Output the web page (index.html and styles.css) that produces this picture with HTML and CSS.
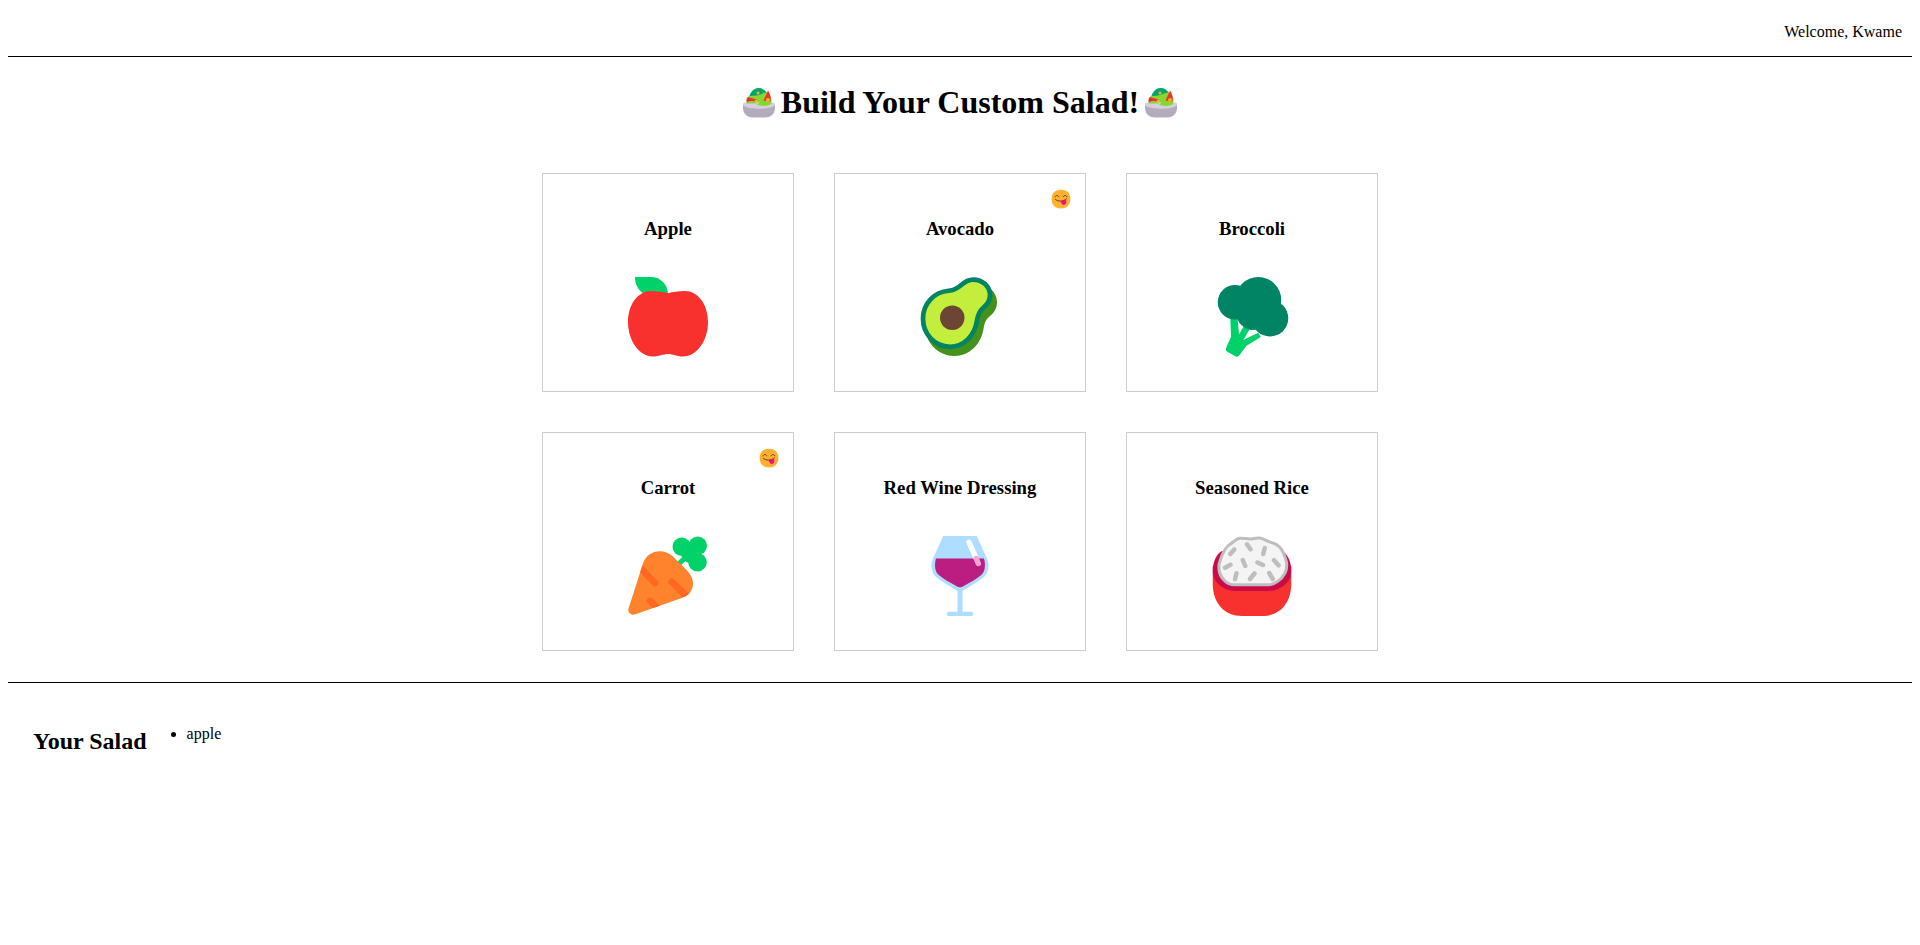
FILE: index.html
```html
<!DOCTYPE html>
<html lang="en">
<head>
  <meta charset="UTF-8" />
  <meta name="viewport" content="width=device-width, initial-scale=1.0" />
  <title>Build Your Custom Salad</title>
  <link rel="stylesheet" href="styles.css">
</head>
<body>
  <!-- shared emoji -->
  <svg class="defs" aria-hidden="true">
    <symbol id="salad" viewBox="0 0 32 32">
      <path d="M4 17C2.500 13 3.500 10 6.500 9C8 5 11 1 15.500 1C20 1 23 4 25 7C28 8 29.500 12 28 17Z" fill="#86D72F"/>
      <path d="M6.500 9C8 5 11 1 15.500 1C19 1 21.500 3 23.500 5.500C20 5.500 17 8 13 8.500C11 8.700 8.500 8.700 6.500 9Z" fill="#00A56F"/>
      <path d="M5 10L13.500 12.500L10.500 17H4.500C3 14.500 3.500 11.500 5 10Z" fill="#F8312F"/>
      <path d="M5 12L10 14L8 16.500H5C4.300 15 4.300 13.300 5 12Z" fill="#F70A8D"/>
      <path d="M20.500 13.500L25 3.500C27 6 28 10 27.500 15Z" fill="#F8312F"/>
      <circle cx="15" cy="6" r="1.500" fill="#FFB02E"/>
      <circle cx="13" cy="15" r="2" fill="#FFB02E"/>
      <circle cx="25" cy="13" r="2" fill="#FFB02E"/>
      <path d="M0 17H32V21C32 26.500 28 30.500 22 30.500H10C4 30.500 0 26.500 0 21Z" fill="#B4ACBC"/>
      <path d="M0 17C0 16 1 15.500 2 15.500H30C31 15.500 32 16 32 17C32 18.500 31 19 30 19.500C25 22.500 7 22.500 2 19.500C1 19 0 18.500 0 17Z" fill="#D6CFDD"/>
      <path d="M3 16.500C6 12.500 10 13 14 16.500ZM14 17.500C18 13.500 25 13 29 16.500C26 19 19 20 14 17.500Z" fill="#86D72F"/>
    </symbol>
    <symbol id="yum" viewBox="0 0 32 32">
      <path d="M16 1C26 1 31 7 31 16C31 25 26 31 16 31C6 31 1 25 1 16C1 7 6 1 16 1Z" fill="#FFB02E"/>
      <path d="M6.500 12.500C8 9.500 11 9.500 12.500 12.500M19.500 12.500C21 9.500 24 9.500 25.500 12.500" fill="none" stroke="#402A32" stroke-width="1.300" stroke-linecap="round"/>
      <path d="M7 16.500C10 20.500 20 20.500 25 15.500" fill="none" stroke="#402A32" stroke-width="1.300" stroke-linecap="round"/>
      <path d="M15.500 19.500L24 17C25 20 24.500 24.500 21.500 25.300C18.500 26 16 23 15.500 19.500Z" fill="#F70A8D"/>
    </symbol>
  </svg>

  <header class="top-bar">Welcome, Kwame</header>
  <hr>

  <h1 class="page-title">
    <svg class="title-emoji emoji-left"><use href="#salad"/></svg>
    Build Your Custom Salad!
    <svg class="title-emoji emoji-right"><use href="#salad"/></svg>
  </h1>

  <main class="ingredients">
    <section class="card">
      <h3>Apple</h3>
      <svg class="food" viewBox="0 0 32 32">
        <path d="M2.800 0H9C13 0 16 3 16 7L6 6.500C4 5 2.800 3 2.800 0Z" fill="#00D26A"/>
        <path d="M16 6.500C18 6 20 5.600 22.800 5.600C28 5.600 32 11 32 18C32 25.500 27.500 31.800 22 31.800C19.500 31.800 18 30.800 16 30.800C14 30.800 12.500 31.800 10 31.800C4.500 31.800 0 25.500 0 18C0 11 4 5.600 9.200 5.600C12 5.600 14 6 16 6.500Z" fill="#F8312F"/>
      </svg>
    </section>

    <section class="card">
      <svg class="yum"><use href="#yum"/></svg>
      <h3>Avocado</h3>
      <svg class="food" viewBox="0 0 32 32">
        <path d="M23.100 2.800C27.300 2.800 30.800 6.100 30.800 10.100C30.800 12.800 29.300 14.600 27.800 15.800C26.300 17 25.800 18.300 25.400 20.800C24.400 26.800 19.800 31.600 13.800 31.600C7.100 31.600 2 26.100 2 19.400C2 12.800 7.100 7.800 13.300 7.400C14.800 7.300 16.300 6.500 17.800 5.300C19.300 3.800 21.100 2.800 23.100 2.800Z" fill="#44911B"/>
        <path d="M21.300 1C25 1 28 3.800 28 7.300C28 9.700 26.700 11.200 25.300 12.300C23.700 13.600 23.100 15.200 22.700 17.800C21.800 23.400 17.600 27.900 12 27.900C5.800 27.900 1.200 22.800 1.200 16.600C1.200 10.500 5.800 5.900 11.500 5.500C13.300 5.400 15 4.500 16.500 3.200C18 1.800 19.500 1 21.300 1Z" fill="#C3EF3C" stroke="#008463" stroke-width="1.900"/>
        <circle cx="12.900" cy="16.300" r="4.900" fill="#6D4534"/>
      </svg>
    </section>

    <section class="card">
      <h3>Broccoli</h3>
      <svg class="food" viewBox="0 0 32 32">
        <path d="M7.300 16L10.200 16L10.800 23L12.800 19.500L15 21L12.500 25.200L18.500 22.300L19.500 24L13.800 27.500L11 31.200C10.600 31.900 10 32 9.300 31.700L6 29.800C5.500 29.400 5.400 28.800 5.700 28.200L7.600 23.900Z" fill="#00D26A"/>
        <circle cx="9.200" cy="10.100" r="6.900" fill="#008463"/>
        <circle cx="18.500" cy="9.200" r="9.200" fill="#008463"/>
        <circle cx="23.200" cy="16.500" r="7.300" fill="#008463"/>
        <circle cx="16.500" cy="14.500" r="6.700" fill="#008463"/>
      </svg>
    </section>

    <section class="card">
      <svg class="yum"><use href="#yum"/></svg>
      <h3>Carrot</h3>
      <svg class="food" viewBox="0 0 32 32">
        <defs>
          <clipPath id="carrot-body">
            <path d="M.2 29L6 11C7 8 9.500 6.100 12.800 6.100C14.800 6.100 16.500 6.900 18 8.200L23.800 14C25.200 15.500 26 17.200 26 19C26 22 24 24 21.500 24.800L3 31.300C1.200 32 -.2 30.600 .2 29Z"/>
          </clipPath>
        </defs>
        <path d="M20 11.500L24 7.500" stroke="#00D26A" stroke-width="2"/>
        <circle cx="21.500" cy="4.300" r="3.700" fill="#00D26A"/>
        <circle cx="27.900" cy="3.900" r="3.700" fill="#00D26A"/>
        <circle cx="27.800" cy="10.500" r="3.700" fill="#00D26A"/>
        <circle cx="24.800" cy="7.200" r="3.500" fill="#00D26A"/>
        <path d="M.2 29L6 11C7 8 9.500 6.100 12.800 6.100C14.800 6.100 16.500 6.900 18 8.200L23.800 14C25.200 15.500 26 17.200 26 19C26 22 24 24 21.500 24.800L3 31.300C1.200 32 -.2 30.600 .2 29Z" fill="#FF822D"/>
        <g clip-path="url(#carrot-body)" stroke="#FF6723" stroke-width="2.700" stroke-linecap="round">
          <path d="M4.500 12.200L10.800 18.800M17.500 18.300L24.500 25M8.800 25.900L13 30"/>
        </g>
      </svg>
    </section>

    <section class="card">
      <h3>Red Wine Dressing</h3>
      <svg class="food" viewBox="0 0 32 32">
        <path d="M15 21H17V30.300H20.500C21 30.300 21.300 30.700 21.300 31.100C21.300 31.600 21 32 20.500 32H11.500C11 32 10.700 31.600 10.700 31.100C10.700 30.700 11 30.300 11.500 30.300H15Z" fill="#AEDDFF"/>
        <path d="M9.300 0H22.700L27 9.500C27.800 11.500 27.500 14.800 25.500 16.500C23 18.500 20 20 17.800 21.500C16.700 22.300 15.300 22.300 14.200 21.500C12 20 9 18.500 6.500 16.500C4.500 14.800 4.200 11.500 5 9.500Z" fill="#AEDDFF"/>
        <path d="M6.400 9H25.600C26.200 11 26.200 14 24.700 15.400C22.700 17.300 20 18.500 17.500 20C16.500 20.700 15.500 20.700 14.500 20C12 18.500 9.300 17.300 7.300 15.400C5.800 14 5.800 11 6.400 9Z" fill="#BB1D80"/>
        <path d="M19.600 2.500L22.500 9" stroke="#fff" stroke-width="2.200" stroke-linecap="round"/>
        <path d="M22.500 9L23.300 11" stroke="#F8A5CF" stroke-width="2.200" stroke-linecap="round"/>
      </svg>
    </section>

    <section class="card">
      <h3>Seasoned Rice</h3>
      <svg class="food" viewBox="0 0 32 32">
        <path d="M.3 12V19C.3 27 5 32 12 32H20C27 32 31.700 27 31.700 19V12Z" fill="#F8312F"/>
        <path d="M.3 14C.3 10 2 7 4 6H28C30 7 31.700 10 31.700 14C31.700 19 27 22 22 22H10C5 22 .3 19 .3 14Z" fill="#CA0B4A"/>
        <path d="M3 14.500C2.600 12.500 2.600 11.500 3.100 10.300C3.800 8 5 4.500 7.200 3.300C8.500 2.500 9.800 1 11.200 .9C12.500 .8 13.800 1.200 15.200 1.200C16.500 1.200 17.800 .6 19.200 .8C20.500 1 21.800 2 23.200 2.400C24.500 2.800 26 3.300 27.200 4.600C28.500 6 29.300 8.500 29.800 10.500C30 12 29.900 13.500 29.200 14.800C27.800 17.500 25 19.500 22.700 19.500H8.700C6.500 19.500 3.800 17.500 3 14.500Z" fill="#F4F4F4" stroke="#BEBEBE" stroke-width="1.200"/>
        <g stroke="#BEBEBE" stroke-width="1.800" stroke-linecap="round">
          <path d="M7.300 7.200L8.900 5.400M14 3.300L15.400 5.300M20.500 7.200L21.100 4.800M24.800 9.700L26.600 11.700M5.200 12.700L7.400 11.500M12.300 9.600L13.300 12M18.200 10.600L20.400 11.600M9.200 17.300L9.800 14.900M15.200 17.200L17 15M22.900 14.800L24.300 17.200"/>
        </g>
      </svg>
    </section>
  </main>

  <hr>

  <footer class="your-salad">
    <h2>Your Salad</h2>
    <ul>
      <li>apple</li>
    </ul>
  </footer>
</body>
</html>
```

FILE: styles.css
```css
body {
  margin: 8px;
  font-family: "Liberation Serif", serif;
  background-color: #fff;
  color: #000;
}

.defs {
  position: absolute;
  width: 0;
  height: 0;
}

hr {
  margin: 8px 0;
  border: 0;
  border-top: 1px solid #000;
  height: 0;
}

.top-bar {
  display: flex;
  justify-content: flex-end;
  padding: 15px 10px 7px 0;
}

.page-title {
  font-size: 32px;
  text-align: center;
  margin: 27px 0 52px;
}

.title-emoji {
  width: 32px;
  height: 32px;
  vertical-align: -6px;
}

.emoji-left {
  margin-right: -2px;
}

.emoji-right {
  margin-left: -2px;
}

.ingredients {
  display: flex;
  flex-wrap: wrap;
  justify-content: center;
  gap: 40px;
  width: 836px;
  margin: 0 auto;
}

.card {
  position: relative;
  width: 250px;
  height: 217px;
  border: 1px solid #ccc;
  display: flex;
  flex-direction: column;
  align-items: center;
}

.card h3 {
  font-size: 18.72px;
  line-height: 21px;
  margin: 44px 0 38px;
}

.food {
  width: 80px;
  height: 80px;
  flex-shrink: 0;
}

.yum {
  position: absolute;
  top: 15px;
  right: 14px;
  width: 20px;
  height: 20px;
}

.ingredients + hr {
  margin-top: 31px;
}

.your-salad {
  display: flex;
  padding: 0 25px;
}

.your-salad h2 {
  font-size: 24px;
  margin: 37px 0 0;
}

.your-salad ul {
  margin: 34px 0 0;
  padding-left: 40px;
}
```
